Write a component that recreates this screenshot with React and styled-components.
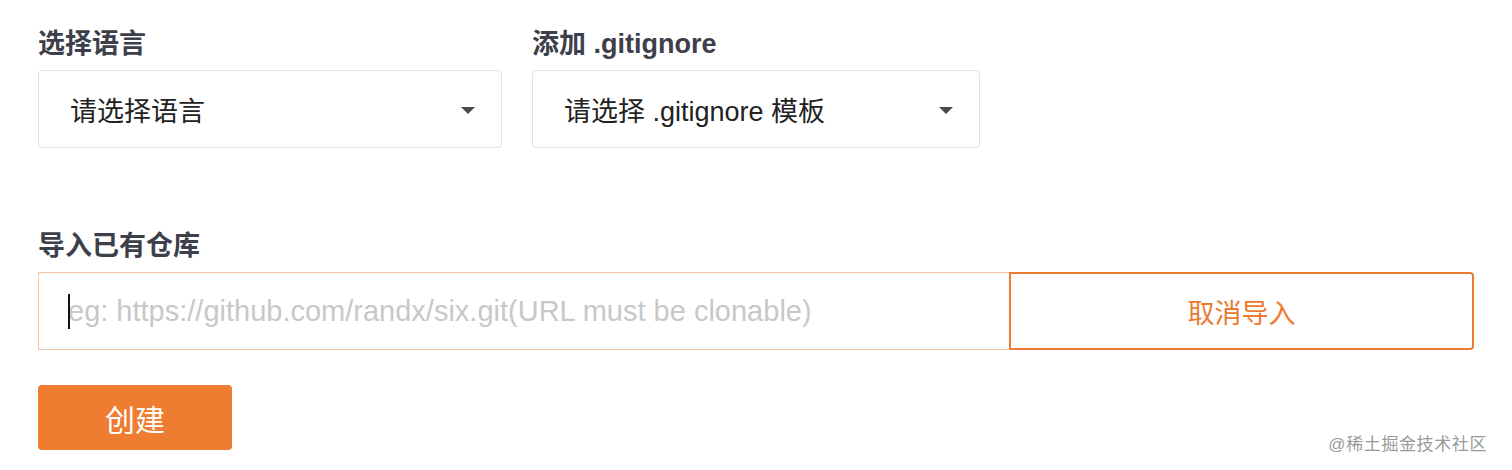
import React from 'react';
import styled, { createGlobalStyle } from 'styled-components';

const GlobalStyle = createGlobalStyle`
  html, body {
    margin: 0;
    padding: 0;
    background: #fff;
  }
  body {
    font-family: "Liberation Sans", "Noto Sans CJK SC", sans-serif;
  }
`;

const Page = styled.div`
  position: relative;
  width: 1512px;
  height: 470px;
  box-sizing: border-box;
  padding: 26px 38px 0;
  background: #fff;
`;

const Row = styled.div`
  display: flex;
  gap: 30px;
`;

const Field = styled.div`
  display: flex;
  flex-direction: column;
  margin-top: ${p => p.$top || 0}px;
`;

const Label = styled.div`
  font-size: 27px;
  line-height: 36px;
  font-weight: 600;
  color: #3d404a;
  margin-bottom: 8px;
`;

const Select = styled.div`
  width: ${p => p.$width}px;
  height: 78px;
  box-sizing: border-box;
  border: 1px solid #e1e1e1;
  border-radius: 4px;
  display: flex;
  align-items: center;
  justify-content: space-between;
  padding: 0 26px 0 31px;
  font-size: 27px;
  color: #222;
`;

const Caret = styled.span`
  width: 0;
  height: 0;
  border-left: 7px solid transparent;
  border-right: 7px solid transparent;
  border-top: 7px solid #4a4a4a;
  margin-top: 2px;
`;

const ImportRow = styled.div`
  display: flex;
  width: 1436px;
  height: 78px;
`;

const InputWrap = styled.div`
  position: relative;
  flex: 0 0 971px;
  box-sizing: border-box;
  border: 1px solid #f3c4a3;
  border-right: none;
  display: flex;
  align-items: center;
  padding-left: 29px;
`;

const Input = styled.input`
  width: 100%;
  border: none;
  outline: none;
  padding: 0;
  font-family: inherit;
  font-size: 29px;
  color: #333;
  background: transparent;
  &::placeholder {
    color: #c8c8c8;
  }
`;

const TextCursor = styled.span`
  position: absolute;
  left: 29px;
  top: 21px;
  width: 2px;
  height: 35px;
  background: #111;
`;

const CancelButton = styled.button`
  flex: 1;
  box-sizing: border-box;
  border: 2px solid #ec7a31;
  border-radius: 0 4px 4px 0;
  background: #fff;
  color: #ec7a31;
  font-family: inherit;
  font-size: 27px;
  cursor: pointer;
`;

const CreateButton = styled.button`
  margin-top: 35px;
  width: 194px;
  height: 65px;
  border: none;
  border-radius: 4px;
  background: #ee7c31;
  color: #fff;
  font-family: inherit;
  font-size: 30px;
  cursor: pointer;
`;

const Watermark = styled.div`
  position: absolute;
  right: 25px;
  bottom: 15px;
  font-size: 17px;
  color: #9a9a9a;
  letter-spacing: 0.6px;
`;

export default function App() {
  return (
    <>
      <GlobalStyle />
      <Page>
        <Row>
          <Field>
            <Label>选择语言</Label>
            <Select $width={464}>
              <span>请选择语言</span>
              <Caret />
            </Select>
          </Field>
          <Field>
            <Label>添加 .gitignore</Label>
            <Select $width={448}>
              <span>请选择 .gitignore 模板</span>
              <Caret />
            </Select>
          </Field>
        </Row>
        <Field $top={80}>
          <Label>导入已有仓库</Label>
          <ImportRow>
            <InputWrap>
              <Input placeholder="eg: https://github.com/randx/six.git(URL must be clonable)" />
              <TextCursor />
            </InputWrap>
            <CancelButton>取消导入</CancelButton>
          </ImportRow>
        </Field>
        <CreateButton>创建</CreateButton>
        <Watermark>@稀土掘金技术社区</Watermark>
      </Page>
    </>
  );
}
